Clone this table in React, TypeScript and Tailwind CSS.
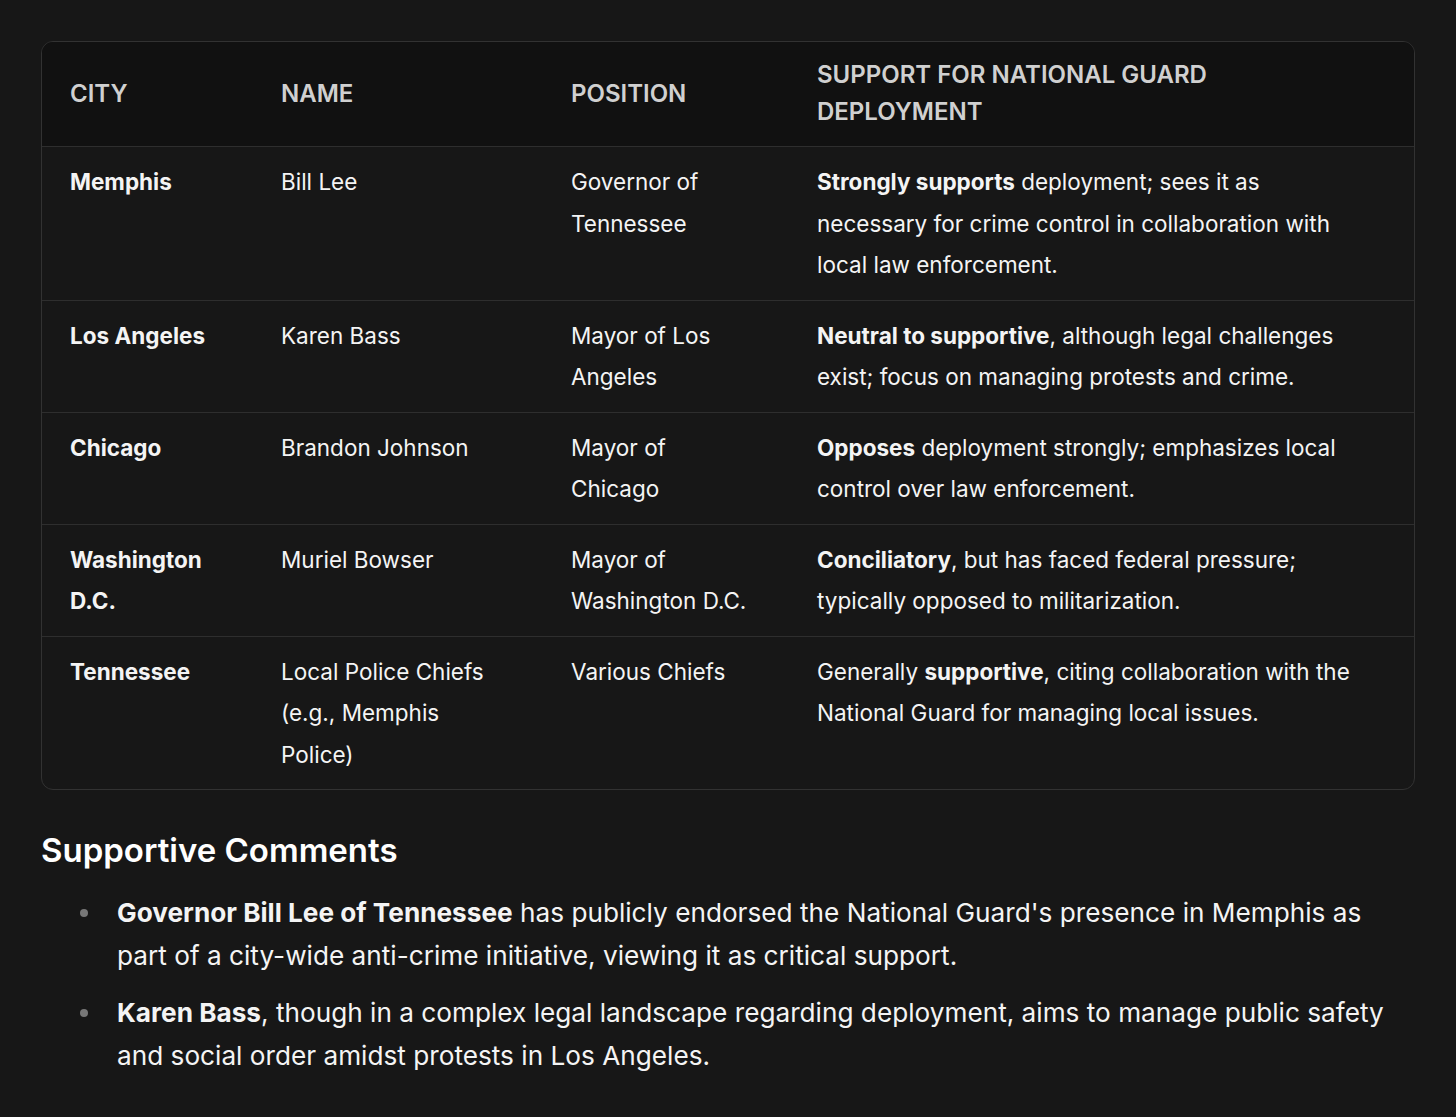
import React from "react";

const rows: { city: string; name: string; pos: string; support: React.ReactNode }[] = [
  {
    city: "Memphis",
    name: "Bill Lee",
    pos: "Governor of Tennessee",
    support: (
      <>
        <b className="font-bold">Strongly supports</b> deployment; sees it as necessary for crime control in collaboration with local law enforcement.
      </>
    ),
  },
  {
    city: "Los Angeles",
    name: "Karen Bass",
    pos: "Mayor of Los Angeles",
    support: (
      <>
        <b className="font-bold">Neutral to supportive</b>, although legal challenges exist; focus on managing protests and crime.
      </>
    ),
  },
  {
    city: "Chicago",
    name: "Brandon Johnson",
    pos: "Mayor of Chicago",
    support: (
      <>
        <b className="font-bold">Opposes</b> deployment strongly; emphasizes local control over law enforcement.
      </>
    ),
  },
  {
    city: "Washington D.C.",
    name: "Muriel Bowser",
    pos: "Mayor of Washington D.C.",
    support: (
      <>
        <b className="font-bold">Conciliatory</b>, but has faced federal pressure; typically opposed to militarization.
      </>
    ),
  },
  {
    city: "Tennessee",
    name: "Local Police Chiefs (e.g., Memphis Police)",
    pos: "Various Chiefs",
    support: (
      <>
        Generally <b className="font-bold">supportive</b>, citing collaboration with the National Guard for managing local issues.
      </>
    ),
  },
];

export default function App() {
  return (
    <div
      className="min-h-[1117px] w-full bg-[#171717] px-[41px] pt-[41px] pb-10 text-[#f4f4f4]"
      style={{ fontFamily: "Inter, 'Open Sans', sans-serif" }}
    >
      <div className="overflow-hidden rounded-[12px] border border-[#323232]">
        <table className="w-full table-fixed border-collapse text-left">
          <colgroup>
            <col className="w-[211px]" />
            <col className="w-[290px]" />
            <col className="w-[246px]" />
            <col />
          </colgroup>
          <thead className="bg-[#111111]">
            <tr>
              <th className="pl-7 pr-7 pt-[14px] pb-[16px] align-middle text-[24px] leading-[37px] font-semibold uppercase text-[#d0d0d0]">City</th>
              <th className="pl-7 pr-7 pt-[14px] pb-[16px] align-middle text-[24px] leading-[37px] font-semibold uppercase text-[#d0d0d0]">Name</th>
              <th className="pl-7 pr-7 pt-[14px] pb-[16px] align-middle text-[24px] leading-[37px] font-semibold uppercase text-[#d0d0d0]">Position</th>
              <th className="pl-7 pr-[50px] pt-[14px] pb-[16px] align-middle text-[24px] leading-[37px] font-semibold uppercase text-[#d0d0d0]">Support for National Guard Deployment</th>
            </tr>
          </thead>
          <tbody>
            {rows.map((r) => (
              <tr key={r.city} className="border-t border-[#2e2e2e]">
                <td className="pl-7 pr-7 py-[14px] align-top text-[22.5px] leading-[41.5px] font-bold">{r.city}</td>
                <td className="pl-7 pr-[47px] py-[14px] align-top text-[22.5px] leading-[41.5px]">{r.name}</td>
                <td className="pl-7 pr-[36px] py-[14px] align-top text-[22.5px] leading-[41.5px]">{r.pos}</td>
                <td className="pl-7 pr-[50px] py-[14px] align-top text-[22.5px] leading-[41.5px]">{r.support}</td>
              </tr>
            ))}
          </tbody>
        </table>
      </div>

      <h2 className="mt-[36px] text-[33px] leading-[48px] font-semibold text-white">Supportive Comments</h2>

      <ul className="mt-[17px] flex flex-col gap-[14px] pl-[39px] pr-[8px]">
        <li className="flex gap-[29px] text-[26.2px] leading-[43px]">
          <span className="mt-[18px] h-[8px] w-[8px] shrink-0 rounded-full bg-[#777777]" />
          <span>
            <b className="font-bold">Governor Bill Lee of Tennessee</b> has publicly endorsed the National Guard's presence in Memphis as part of a city-wide anti-crime initiative, viewing it as critical support.
          </span>
        </li>
        <li className="flex gap-[29px] text-[26.2px] leading-[43px]">
          <span className="mt-[18px] h-[8px] w-[8px] shrink-0 rounded-full bg-[#777777]" />
          <span>
            <b className="font-bold">Karen Bass</b>, though in a complex legal landscape regarding deployment, aims to manage public safety and social order amidst protests in Los Angeles.
          </span>
        </li>
      </ul>
    </div>
  );
}
